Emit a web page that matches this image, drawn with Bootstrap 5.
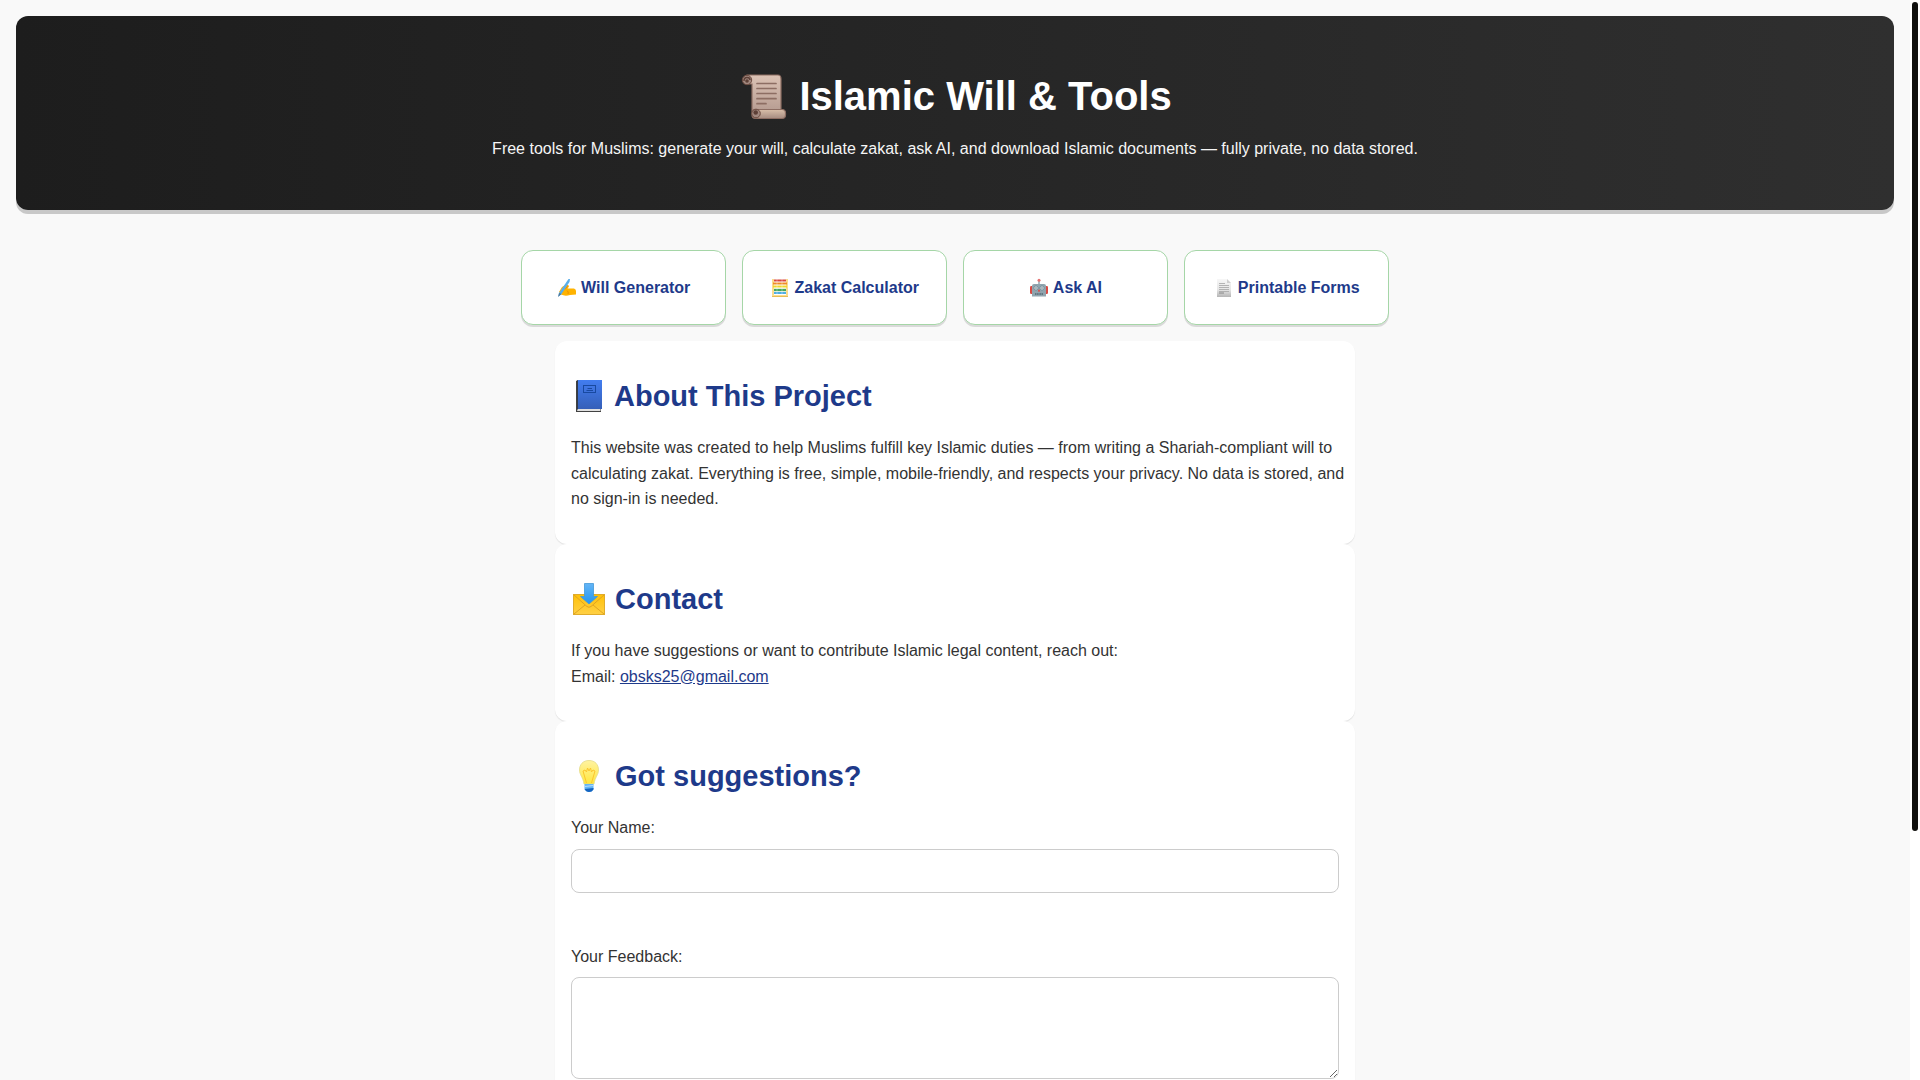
<!DOCTYPE html>
<html lang="en">
<head>
<meta charset="utf-8">
<meta name="viewport" content="width=device-width, initial-scale=1">
<title>Islamic Will &amp; Tools</title>
<link href="https://cdn.jsdelivr.net/npm/bootstrap@5.3.0/dist/css/bootstrap.min.css" rel="stylesheet">
<style>
  body { font-family: "Liberation Sans", Arial, sans-serif; font-size: 16px; line-height: 1.6; color: #333; background: #f9f9f9; }
  .page-scroll { overflow-y: auto; scrollbar-width: none; }
  .page-scroll::-webkit-scrollbar { display: none; }
  .scroll-rail { width: 10px; padding: 2px; background: #fff; }
  .scroll-thumb { width: 6px; height: 77%; border-radius: 3px; background: #10100e; }
  .hero { border-radius: 12px; background: linear-gradient(to right, #1d1d1d, #2f2f2f); box-shadow: 0 4px 0 #c8c8c8; color: #fff; }
  .hero h1 { font-size: 40px; line-height: 64px; font-weight: 700; }
  .hero p { color: #f5f5f5; }
  .hero svg { width: 50px; height: 50px; vertical-align: -11px; }
  .tool-grid { max-width: 900px; }
  .tool-link { border: 1px solid #a5d6a7; border-radius: 12px; background: #fff; color: #1e3a8a; font-weight: 700; box-shadow: 0 2px 0 rgba(0,0,0,.12); }
  .tool-link svg { width: 20px; height: 20px; vertical-align: -5px; }
  .info-panel { max-width: 800px; border-radius: 12px; background: #fff; box-shadow: 0 1px 1px rgba(0,0,0,.1); }
  .info-panel h2 { font-size: 29px; line-height: 46px; font-weight: 700; color: #1e3a8a; }
  .info-panel h2 svg { width: 36px; height: 36px; vertical-align: -8px; }
  .info-panel p { margin-right: -12px; }
  .info-panel a { color: #1e3a8a; }
  .field, .field:focus { border: 1px solid #ccc; border-radius: 8px; background: #fff; }
  input.field { height: 44px; }
  textarea.field { height: 102px; }
  .field-group { margin-bottom: 51px; }
</style>
</head>
<body>
<div class="d-flex vh-100">
  <div class="page-scroll flex-grow-1 p-3">
    <header class="hero text-center p-5 mb-4">
      <h1 class="mb-2"><svg viewBox="0 0 50 50" aria-hidden="true">
          <defs>
            <linearGradient id="paper" x1="0" y1="0" x2="0" y2="1"><stop offset="0" stop-color="#dcc3b5"/><stop offset="1" stop-color="#b79d92"/></linearGradient>
            <linearGradient id="roll" x1="0" y1="0" x2="0" y2="1"><stop offset="0" stop-color="#d9bfa9"/><stop offset="1" stop-color="#a58b80"/></linearGradient>
          </defs>
          <path d="M9 4H40Q43 4 43 8V40H14V13H9Z" fill="url(#paper)" stroke="#8d6e63" stroke-width="1.2"/>
          <circle cx="9" cy="9" r="4.7" fill="#a1887f" stroke="#6d4c41" stroke-width="1"/>
          <path d="M6 10Q6 6.500 9 6.500T12 9" fill="none" stroke="#5d4037" stroke-width="1.400"/>
          <circle cx="9" cy="10" r="1.800" fill="#5d4037"/>
          <path d="M19 12.500H38M19 17.500H38M19 22.500H38M19 27.700H38M19 32.700H28" stroke="#8d6e63" stroke-width="1.700" stroke-linecap="round"/>
          <rect x="14" y="38.500" width="33.500" height="9" rx="3.500" fill="url(#roll)" stroke="#8d6e63" stroke-width="1.200"/>
          <circle cx="18" cy="42.500" r="4.300" fill="#a1887f" stroke="#6d4c41" stroke-width="1"/>
          <circle cx="17.700" cy="41.500" r="2.300" fill="#5d4037"/>
        </svg> Islamic Will &amp; Tools</h1>
      <p class="mb-0">Free tools for Muslims: generate your will, calculate zakat, ask AI, and download Islamic documents — fully private, no data stored.</p>
    </header>
    <nav class="tool-grid d-flex flex-wrap gap-3 p-3 mx-auto" aria-label="Tools">
      <a class="tool-link col text-center text-decoration-none text-nowrap py-4" href="#will"><svg viewBox="0 0 20 20" aria-hidden="true">
          <path d="M2 14L5 9Q8 6.500 11 7L12 8.500L10.500 10.500L17 10.500Q19 11 19 13V16.500L13 17Q8 18.500 4 16.500Z" fill="#ffb300"/>
          <path d="M11 7.500L8 11.500M10 12.500Q12 14 11 16" fill="none" stroke="#ef8f00" stroke-width="1"/>
          <path d="M11.500 1H13L12.500 4L4.500 16L1.500 18.500L2 15Z" fill="#5aaeea"/>
          <path d="M2 15L4.500 16L1 19Z" fill="#4a789c"/>
        </svg> Will Generator</a>
      <a class="tool-link col text-center text-decoration-none text-nowrap py-4" href="#zakat"><svg viewBox="0 0 20 20" aria-hidden="true">
          <path d="M2 1H4V17H16V1H18V19H2Z" fill="#fbdc8d"/>
          <path d="M2 18.500H18" stroke="#e8be57"/>
          <path d="M4 2.500H16" stroke="#d9453d" stroke-width="2"/>
          <path d="M3 5.500H17" stroke="#ef8b22" stroke-width="2"/>
          <path d="M3 8.500H17" stroke="#efd62e" stroke-width="2"/>
          <path d="M4 12H16" stroke="#46a65a" stroke-width="2.400"/>
          <path d="M4 15H16" stroke="#3da5e0" stroke-width="1.800"/>
          <path d="M7 1V16M12 1V16" stroke="#fff" stroke-width=".500" opacity=".7"/>
        </svg> Zakat Calculator</a>
      <a class="tool-link col text-center text-decoration-none text-nowrap py-4" href="#ask"><svg viewBox="0 0 20 20" aria-hidden="true">
          <rect x="1" y="8" width="3" height="8" rx="1.200" fill="#d94a43"/><rect x="16" y="8" width="3" height="8" rx="1.200" fill="#d94a43"/>
          <path d="M10 3V7" stroke="#78909c" stroke-width="1.200"/><circle cx="10" cy="2.300" r="1.500" fill="#e57373"/>
          <path d="M5 6H15Q17 6 17 8V18.500H3V8Q3 6 5 6Z" fill="#90a4ae"/>
          <circle cx="7" cy="10" r="2" fill="#fff" stroke="#607d8b" stroke-width=".8"/><circle cx="13" cy="10" r="2" fill="#fff" stroke="#607d8b" stroke-width=".8"/>
          <circle cx="7" cy="10" r=".8" fill="#455a64"/><circle cx="13" cy="10" r=".8" fill="#455a64"/>
          <path d="M10 11L11.200 13.500H8.800Z" fill="#e53935"/>
          <path d="M6 16H14" stroke="#536872" stroke-width="1.600" stroke-dasharray="1.200 .500"/>
        </svg> Ask AI</a>
      <a class="tool-link col text-center text-decoration-none text-nowrap py-4" href="#forms"><svg viewBox="0 0 20 20" aria-hidden="true">
          <defs><linearGradient id="sheet" x1="0" y1="0" x2="0" y2="1"><stop offset="0" stop-color="#f7f7f7"/><stop offset=".6" stop-color="#e5e5e5"/><stop offset="1" stop-color="#b5b5b5"/></linearGradient></defs>
          <path d="M4 1H14L18 5V19H4Z" fill="url(#sheet)"/>
          <path d="M14 1V5H18Z" fill="#cfcfcf"/>
          <path d="M6 5.500H12M6 7.500H16M6 9.500H16M6 11.500H16M6 13.500H16" stroke="#a4a4a4" stroke-width=".8"/>
          <path d="M6 15H11" stroke="#777" stroke-width=".8"/>
        </svg> Printable Forms</a>
    </nav>
    <main>
      <section class="info-panel mx-auto p-3">
        <h2 class="my-3"><svg viewBox="0 0 36 36" aria-hidden="true">
            <defs><linearGradient id="cover" x1="0" y1="0" x2="0" y2="1"><stop offset="0" stop-color="#427df0"/><stop offset="1" stop-color="#355fb8"/></linearGradient></defs>
            <path d="M5 3L7 2V31H30V34H5Z" fill="#424242"/>
            <path d="M7 30.500H29.500V33H6Z" fill="#e0e0e0"/>
            <rect x="7" y="2" width="24" height="29" fill="url(#cover)"/>
            <path d="M6.500 2.500V31" stroke="#303b4c" stroke-width="1"/>
            <rect x="12.500" y="7.500" width="12" height="7" fill="none" stroke="#1849a0" stroke-width="1"/>
            <path d="M16.500 10.500H21M15.500 12.500H22" stroke="#1849a0" stroke-width="1.200"/>
          </svg> About This Project</h2>
        <p class="mb-3">This website was created to help Muslims fulfill key Islamic duties — from writing a Shariah-compliant will to calculating zakat. Everything is free, simple, mobile-friendly, and respects your privacy. No data is stored, and no sign-in is needed.</p>
      </section>
      <section class="info-panel mx-auto p-3">
        <h2 class="my-3"><svg viewBox="0 0 36 36" aria-hidden="true">
            <defs>
              <linearGradient id="mail" x1="0" y1="0" x2="0" y2="1"><stop offset="0" stop-color="#ffc107"/><stop offset="1" stop-color="#ffd045"/></linearGradient>
              <linearGradient id="arrow" x1="0" y1="0" x2="0" y2="1"><stop offset="0" stop-color="#64b5f6"/><stop offset="1" stop-color="#2196f3"/></linearGradient>
            </defs>
            <rect x="2.500" y="13.500" width="31" height="20" fill="url(#mail)" stroke="#e0ac2b"/>
            <path d="M3 33L14 24M33 33L22 24M3 14L16 25.500Q18 27 20 25.500L33 14" fill="none" stroke="#e0a420" stroke-width="1"/>
            <path d="M13.500 2.500H22.500V15.500H26.500L18 23L9.500 15.500H13.500Z" fill="url(#arrow)" stroke="#4398d8" stroke-width=".8"/>
          </svg> Contact</h2>
        <p class="mb-3">If you have suggestions or want to contribute Islamic legal content, reach out:<br>Email: <a href="mailto:obsks25@gmail.com">obsks25@gmail.com</a></p>
      </section>
      <section class="info-panel mx-auto p-3">
        <h2 class="my-3"><svg viewBox="0 0 36 36" aria-hidden="true">
            <defs><linearGradient id="glass" x1="0" y1="0" x2="0" y2="1"><stop offset="0" stop-color="#fff3a0"/><stop offset="1" stop-color="#ffe63e"/></linearGradient></defs>
            <path d="M18 2.500C12 2.500 8.500 6.500 8.500 12C8.500 17 12 19 13 26H23C24 19 27.500 17 27.500 12C27.500 6.500 24 2.500 18 2.500Z" fill="url(#glass)" stroke="#e3da86" stroke-width=".8"/>
            <path d="M15.500 25L12 13L14 12L15.500 14L16.500 10L18 13L19.500 10L20.500 14L22 12L24 13L20.500 25" fill="none" stroke="#fbc52d" stroke-width="1"/>
            <path d="M13.500 26H22.500V31Q21 34 18 34T13.500 31Z" fill="#64b5f6"/>
            <path d="M14 28.500L22 27.500" stroke="#b3dcfb" stroke-width="1.200"/>
            <path d="M13.500 31L22.500 30V31.500Q21 34 18 34T13.500 31Z" fill="#1565c0"/>
          </svg> Got suggestions?</h2>
        <form>
          <div class="field-group">
            <label class="d-block mb-2" for="name">Your Name:</label>
            <input class="field form-control" type="text" id="name" name="name">
          </div>
          <div class="field-group">
            <label class="d-block mb-2" for="feedback">Your Feedback:</label>
            <textarea class="field form-control" id="feedback" name="feedback"></textarea>
          </div>
        </form>
      </section>
    </main>
  </div>
  <div class="scroll-rail flex-shrink-0" aria-hidden="true"><div class="scroll-thumb"></div></div>
</div>
<script src="https://cdn.jsdelivr.net/npm/bootstrap@5.3.0/dist/js/bootstrap.bundle.min.js"></script>
</body>
</html>
